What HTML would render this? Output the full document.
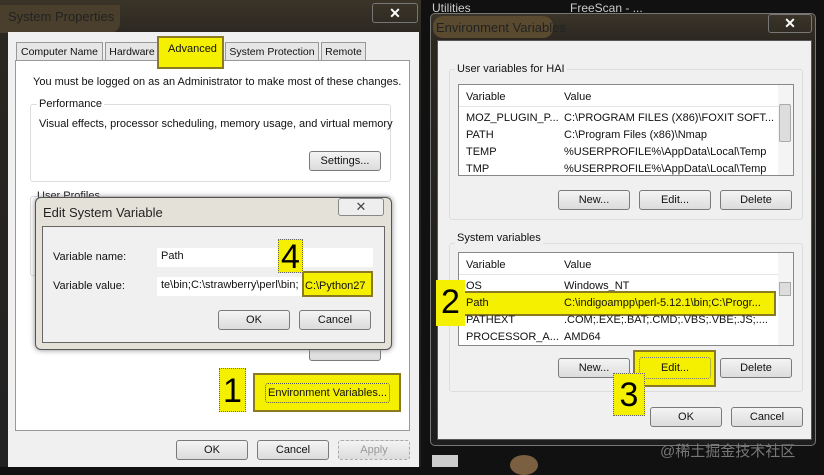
<!DOCTYPE html><html><head><meta charset="utf-8"><style>
*{margin:0;padding:0;box-sizing:border-box;white-space:nowrap}
body{width:824px;height:467px;background:#111;position:relative;overflow:hidden;font-family:"Liberation Sans","Noto Sans CJK SC",sans-serif;font-size:11px;color:#111}
.a{position:absolute}
.btn{position:absolute;height:20px;border:1px solid #7a7a7a;border-radius:3px;background:linear-gradient(#f4f4f4,#dcdcdc);text-align:center;line-height:18px;font-size:11px}
.y{position:absolute;background:#f5f000;border:2px solid #8a7a20}
.num{position:absolute;background:#f5f000;border:1px dotted #666;font-size:34px;line-height:1;text-align:center;color:#000}
.grp{position:absolute;border:1px solid #ddd;border-radius:3px}
.lbl{position:absolute;background:#f0f0f0;padding:0 2px}
.list{position:absolute;background:#fff;border:1px solid #888}
.hdr{position:absolute;left:0;top:0;height:23px;background:#fff;border-bottom:1px solid #e5e5e5}
.tab{position:absolute;top:42px;height:19px;border:1px solid #999;background:#e6e6e6;padding:3px 0 0;text-align:center;font-size:10.5px;overflow:hidden}
</style></head><body>
<!-- left window -->
<div class="a" style="left:0;top:0;width:421px;height:467px;background:linear-gradient(#3a3428,#2a2620 40px,#222 100%)"></div>
<div class="a" style="left:0;top:5px;width:120px;height:28px;background:#4a3f2c;border-radius:0 0 10px 0"></div>
<div class="a" style="left:8px;top:9px;font-size:13px;color:#222">System Properties</div>
<div class="a" style="left:372px;top:3px;width:46px;height:20px;border:1px solid #777;border-radius:3px;color:#fff;text-align:center;font-weight:bold;font-size:14px;line-height:18px">✕</div>
<div class="a" style="left:8px;top:32px;width:411px;height:435px;background:#f0f0f0"></div>
<div class="a" style="left:15px;top:60px;width:395px;height:371px;background:#fff;border:1px solid #999"></div>
<div class="tab" style="left:16px;width:87px">Computer Name</div>
<div class="tab" style="left:105px;width:54px">Hardware</div>
<div class="y" style="left:157px;top:36px;width:67px;height:33px;border-width:2px"></div>
<div class="a" style="left:168px;top:43px">Advanced</div>
<div class="tab" style="left:225px;width:94px">System Protection</div>
<div class="tab" style="left:321px;width:45px">Remote</div>
<div class="a" style="left:33px;top:76px">You must be logged on as an Administrator to make most of these changes.</div>
<div class="grp" style="left:30px;top:104px;width:361px;height:78px"></div>
<div class="a" style="left:37px;top:98px;background:#fff;padding:0 2px">Performance</div>
<div class="a" style="left:39px;top:118px">Visual effects, processor scheduling, memory usage, and virtual memory</div>
<div class="btn" style="left:309px;top:151px;width:72px">Settings...</div>
<div class="grp" style="left:30px;top:196px;width:361px;height:80px"></div>
<div class="a" style="left:37px;top:190px;background:#fff">User Profiles</div>
<div class="btn" style="left:309px;top:341px;width:72px;color:#333"></div>
<div class="num" style="left:219px;top:368px;width:27px;height:44px;padding-top:5px">1</div>
<div class="y" style="left:253px;top:373px;width:148px;height:39px"></div>
<div class="a" style="left:265px;top:383px;width:125px;height:20px;border:1px dotted #555;border-radius:3px;text-align:center;line-height:18px">Environment Variables...</div>
<div class="btn" style="left:176px;top:440px;width:72px">OK</div>
<div class="btn" style="left:257px;top:440px;width:72px">Cancel</div>
<div class="btn" style="left:338px;top:440px;width:72px;color:#999;border-color:#aaa;border-style:dashed">Apply</div>
<!-- edit dialog -->
<div class="a" style="left:35px;top:197px;width:357px;height:153px;background:#e4e1d8;border:1px solid #555;border-radius:6px;box-shadow:0 0 6px #888"></div>
<div class="a" style="left:43px;top:205px;font-size:13px;color:#222">Edit System Variable</div>
<div class="a" style="left:338px;top:198px;width:46px;height:18px;border:1px solid #888;border-radius:3px;background:#eee;text-align:center;font-size:13px;line-height:16px;color:#444">✕</div>
<div class="a" style="left:42px;top:226px;width:343px;height:117px;background:#f0f0f0;border:1px solid #666"></div>
<div class="a" style="left:53px;top:251px">Variable name:</div>
<div class="a" style="left:53px;top:280px">Variable value:</div>
<div class="a" style="left:157px;top:248px;width:216px;height:19px;background:#fff;padding:2px 4px">Path</div>
<div class="a" style="left:157px;top:277px;width:216px;height:19px;background:#fff;padding:2px 4px">te\bin;C:\strawberry\perl\bin;</div>
<div class="y" style="left:302px;top:271px;width:71px;height:26px;border-width:2px"></div>
<div class="a" style="left:305px;top:280px">C:\Python27</div>
<div class="num" style="left:278px;top:239px;width:25px;height:34px;padding-top:0">4</div>
<div class="btn" style="left:218px;top:310px;width:72px">OK</div>
<div class="btn" style="left:299px;top:310px;width:72px">Cancel</div>
<!-- right side -->
<div class="a" style="left:432px;top:1px;color:#ccc;font-size:12px">Utilities</div>
<div class="a" style="left:570px;top:1px;color:#ccc;font-size:12px">FreeScan - ...</div>
<div class="a" style="left:430px;top:13px;width:386px;height:433px;background:linear-gradient(#3a3428,#2a2620 30px,#1e1e1e);border:1px solid #777;border-radius:5px"></div>
<div class="a" style="left:433px;top:16px;width:120px;height:22px;background:#5a4a30;border-radius:10px"></div>
<div class="a" style="left:436px;top:20px;font-size:13px;color:#222">Environment Variables</div>
<div class="a" style="left:768px;top:14px;width:44px;height:19px;border:1px solid #777;border-radius:3px;color:#fff;font-weight:bold;font-size:14px;text-align:center;line-height:17px">✕</div>
<div class="a" style="left:437px;top:40px;width:375px;height:400px;background:#f0f0f0;border:1px solid #555"></div>
<div class="grp" style="left:449px;top:69px;width:354px;height:151px"></div>
<div class="lbl" style="left:455px;top:63px">User variables for HAI</div>
<div class="list" style="left:458px;top:84px;width:336px;height:92px"></div>
<div class="hdr" style="left:459px;top:85px;width:320px;height:22px"></div>
<div class="a" style="left:466px;top:91px">Variable</div><div class="a" style="left:564px;top:91px">Value</div>
<div class="a" style="left:778px;top:85px;width:15px;height:90px;background:#f4f4f4"></div>
<div class="a" style="left:779px;top:104px;width:12px;height:38px;background:#ddd;border:1px solid #aaa;border-radius:2px"></div>
<div class="a" style="left:466px;top:112px">MOZ_PLUGIN_P...</div><div class="a" style="left:564px;top:112px">C:\PROGRAM FILES (X86)\FOXIT SOFT...</div>
<div class="a" style="left:466px;top:129px">PATH</div><div class="a" style="left:564px;top:129px">C:\Program Files (x86)\Nmap</div>
<div class="a" style="left:466px;top:146px">TEMP</div><div class="a" style="left:564px;top:146px">%USERPROFILE%\AppData\Local\Temp</div>
<div class="a" style="left:466px;top:163px">TMP</div><div class="a" style="left:564px;top:163px">%USERPROFILE%\AppData\Local\Temp</div>
<div class="btn" style="left:558px;top:190px;width:72px">New...</div>
<div class="btn" style="left:639px;top:190px;width:72px">Edit...</div>
<div class="btn" style="left:720px;top:190px;width:72px">Delete</div>
<div class="grp" style="left:449px;top:243px;width:354px;height:149px"></div>
<div class="lbl" style="left:455px;top:232px">System variables</div>
<div class="list" style="left:458px;top:252px;width:336px;height:94px"></div>
<div class="hdr" style="left:459px;top:253px;width:320px;height:22px"></div>
<div class="a" style="left:466px;top:259px">Variable</div><div class="a" style="left:564px;top:259px">Value</div>
<div class="a" style="left:778px;top:253px;width:15px;height:92px;background:#f4f4f4"></div>
<div class="a" style="left:779px;top:282px;width:12px;height:14px;background:#ddd;border:1px solid #aaa"></div>
<div class="a" style="left:466px;top:280px">OS</div><div class="a" style="left:564px;top:280px">Windows_NT</div>
<div class="y" style="left:458px;top:291px;width:318px;height:25px"></div>
<div class="a" style="left:466px;top:297px">Path</div><div class="a" style="left:564px;top:297px">C:\indigoampp\perl-5.12.1\bin;C:\Progr...</div>
<div class="a" style="left:466px;top:314px">PATHEXT</div><div class="a" style="left:564px;top:314px">.COM;.EXE;.BAT;.CMD;.VBS;.VBE;.JS;....</div>
<div class="a" style="left:466px;top:331px">PROCESSOR_A...</div><div class="a" style="left:564px;top:331px">AMD64</div>
<div class="num" style="left:436px;top:280px;width:29px;height:46px;padding-top:5px;border:none">2</div>
<div class="btn" style="left:558px;top:358px;width:72px">New...</div>
<div class="y" style="left:633px;top:350px;width:83px;height:37px"></div>
<div class="a" style="left:639px;top:357px;width:72px;height:22px;border:1px dotted #777;border-radius:3px;text-align:center;line-height:20px">Edit...</div>
<div class="btn" style="left:720px;top:358px;width:72px">Delete</div>
<div class="num" style="left:613px;top:373px;width:32px;height:43px;padding-top:4px">3</div>
<div class="btn" style="left:650px;top:407px;width:72px">OK</div>
<div class="btn" style="left:731px;top:407px;width:72px">Cancel</div>
<div class="a" style="left:660px;top:440px;color:#777;font-size:15px">@稀土掘金技术社区</div>
<div class="a" style="left:432px;top:455px;width:26px;height:12px;background:#ccc"></div>
<div class="a" style="left:510px;top:455px;width:28px;height:20px;border-radius:50%;background:#7a6040"></div>
</body></html>
